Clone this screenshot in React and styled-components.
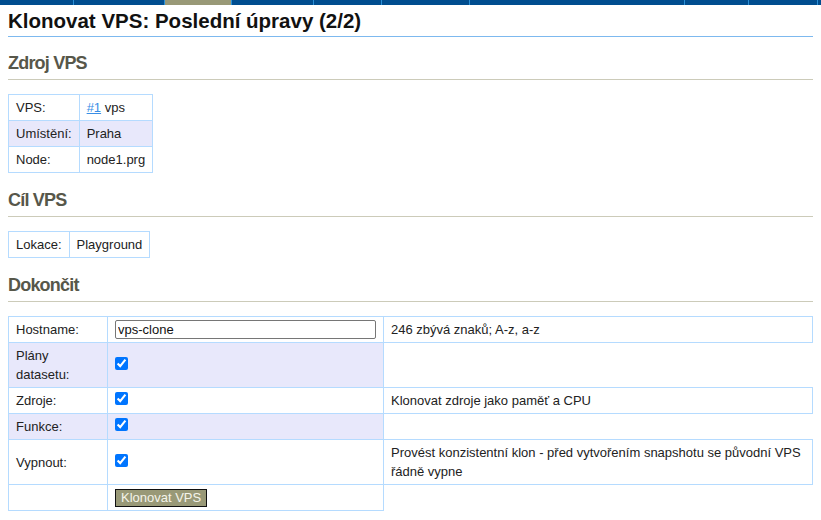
import React from 'react';
import styled, { createGlobalStyle } from 'styled-components';

const GlobalStyle = createGlobalStyle`
  body {
    margin: 0;
    background: #fff;
    font-family: "Liberation Sans", Arial, sans-serif;
    font-size: 13px;
    color: #222;
  }
`;

const Nav = styled.ul`
  display: flex;
  margin: 0;
  padding: 0;
  list-style: none;
  height: 5px;
  background: #004d8f;
`;

const NavItem = styled.li`
  width: ${p => p.w}px;
  flex: none;
  height: 5px;
  background: ${p => (p.active ? '#999977' : '#004d8f')};
  border-right: 1px solid #2b8fd6;
`;

const Content = styled.div`
  padding: 0 8px;
`;

const Title = styled.h1`
  margin: 0;
  padding: 4px 0 4px;
  font-size: 20.5px;
  line-height: 23px;
  font-weight: bold;
  color: #111;
  border-bottom: 1px solid #7db9ef;
`;

const Heading = styled.h2`
  margin: 16px 0 14px;
  padding: 0 0 5px;
  font-size: 18px;
  line-height: 22px;
  font-weight: bold;
  letter-spacing: -0.8px;
  color: #57574a;
  border-bottom: 1px solid #cccbb9;

  &:first-of-type {
    margin-top: 15px;
  }
`;

const Table = styled.table`
  border-collapse: collapse;
  width: ${p => (p.wide ? '100%' : 'auto')};
`;

const Row = styled.tr`
  background: ${p => (p.alt ? '#e8e8fb' : '#fff')};
`;

const Cell = styled.td`
  border: 1px solid #b5dbff;
  padding: 3px 7px;
  line-height: 19px;
  vertical-align: middle;
  width: ${p => (p.w ? `${p.w}px` : 'auto')};
  color: #222;
`;

const Link = styled.a`
  color: #3a8ee6;
  text-decoration: underline;
`;

const TextInput = styled.input`
  box-sizing: border-box;
  display: block;
  width: 261px;
  height: 19px;
  margin: 0;
  padding: 0 2px;
  font-family: "Liberation Sans", Arial, sans-serif;
  font-size: 13px;
  color: #111;
  border: 1px solid #767676;
  border-radius: 2px;
`;

const Check = styled.input`
  margin: 1px 0 5px;
  width: 13px;
  height: 13px;
  vertical-align: top;
`;

const Button = styled.button`
  display: block;
  margin: 1px 0 0;
  padding: 0 5px;
  height: 18px;
  font-family: "Liberation Sans", Arial, sans-serif;
  font-size: 13px;
  line-height: 16px;
  color: #f4f4ea;
  background: #999977;
  border: 1px solid #111;
  border-radius: 0;
`;

const navWidths = [73, 90, 66, 81, 67, 87, 214, 63, 68, 3];

const App = () => {
  return (
    <>
      <GlobalStyle />
      <Nav>
        {navWidths.map((w, i) => (
          <NavItem key={i} w={w} active={i === 2} />
        ))}
      </Nav>
      <Content>
        <Title>Klonovat VPS: Poslední úpravy (2/2)</Title>

        <Heading>Zdroj VPS</Heading>
        <Table>
          <tbody>
            <Row>
              <Cell>VPS:</Cell>
              <Cell><Link href="#">#1</Link> vps</Cell>
            </Row>
            <Row alt>
              <Cell>Umístění:</Cell>
              <Cell>Praha</Cell>
            </Row>
            <Row>
              <Cell>Node:</Cell>
              <Cell>node1.prg</Cell>
            </Row>
          </tbody>
        </Table>

        <Heading>Cíl VPS</Heading>
        <Table>
          <tbody>
            <Row>
              <Cell>Lokace:</Cell>
              <Cell>Playground</Cell>
            </Row>
          </tbody>
        </Table>

        <Heading>Dokončit</Heading>
        <Table wide>
          <tbody>
            <Row>
              <Cell w={84}>Hostname:</Cell>
              <Cell w={261}><TextInput defaultValue="vps-clone" /></Cell>
              <Cell>246 zbývá znaků; A-z, a-z</Cell>
            </Row>
            <Row alt>
              <Cell>Plány datasetu:</Cell>
              <Cell><Check type="checkbox" defaultChecked /></Cell>
            </Row>
            <Row>
              <Cell>Zdroje:</Cell>
              <Cell><Check type="checkbox" defaultChecked /></Cell>
              <Cell>Klonovat zdroje jako paměť a CPU</Cell>
            </Row>
            <Row alt>
              <Cell>Funkce:</Cell>
              <Cell><Check type="checkbox" defaultChecked /></Cell>
            </Row>
            <Row>
              <Cell>Vypnout:</Cell>
              <Cell><Check type="checkbox" defaultChecked /></Cell>
              <Cell>Provést konzistentní klon - před vytvořením snapshotu se původní VPS řádně vypne</Cell>
            </Row>
            <Row>
              <Cell></Cell>
              <Cell><Button>Klonovat VPS</Button></Cell>
            </Row>
          </tbody>
        </Table>
      </Content>
    </>
  );
};

export default App;
